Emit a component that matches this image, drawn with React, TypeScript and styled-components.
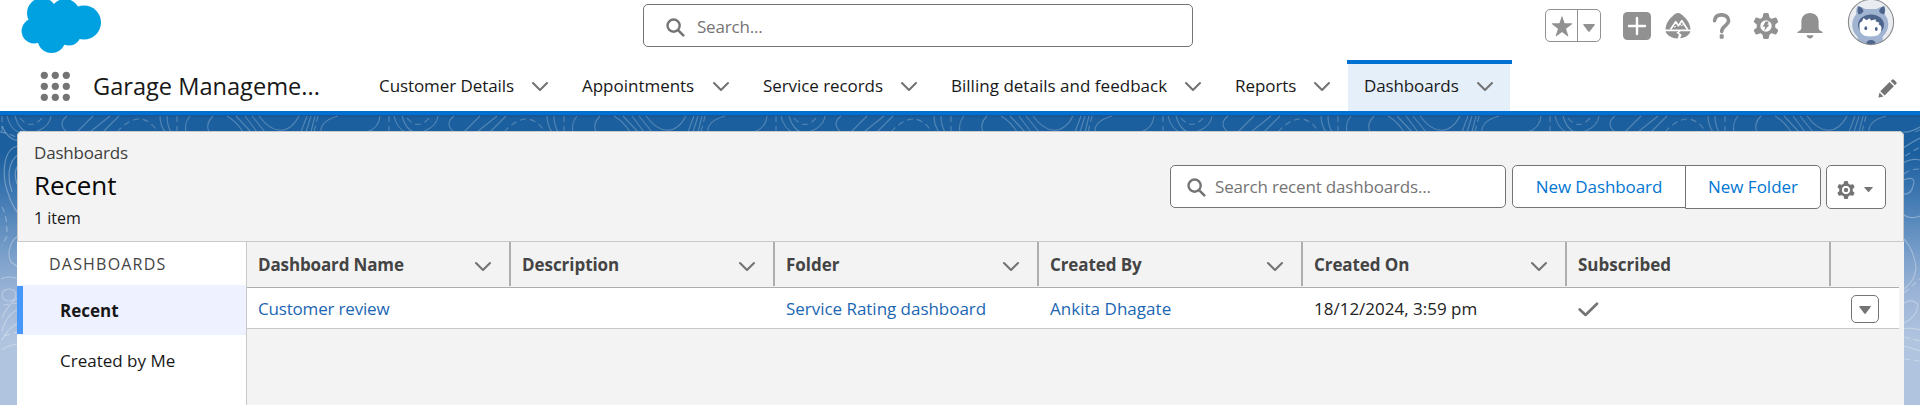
import React from "react";
import styled, { createGlobalStyle } from "styled-components";

const gray = "#747474";
const iconGray = "#919191";
const brand = "#0070d2";
const line = "#c9c9c9";
const darkLine = "#aeaeae";

const GlobalStyle = createGlobalStyle`
  *, *::before, *::after { box-sizing: border-box; }
  body {
    margin: 0;
    overflow: hidden;
    font-family: "Open Sans", "Noto Sans", sans-serif;
    font-size: 17px;
    line-height: 24px;
    color: #181818;
    background: #fff;
  }
  svg { display: block; flex: none; }
`;

const Page = styled.div`
  display: flex;
  flex-direction: column;
  height: 405px;
  overflow: hidden;
`;

const Text = styled.span<{ $ls?: number }>`
  white-space: nowrap;
  letter-spacing: ${(p) => p.$ls ?? 0}px;
`;

/* ---------- global header ---------- */

const TopBar = styled.header`
  display: grid;
  grid-template-columns: 643px 550px 1fr;
  align-items: start;
  flex: none;
  height: 60px;
  background: #fff;
`;

const LogoArea = styled.div`
  padding-left: 20px;
`;

const SearchBox = styled.div<{ $w: number; $pad: number; $gap: number }>`
  display: flex;
  align-items: center;
  gap: ${(p) => p.$gap}px;
  width: ${(p) => p.$w}px;
  height: 43px;
  padding: 1px 0 0 ${(p) => p.$pad}px;
  border: 1px solid ${gray};
  border-radius: 5px;
  background: #fff;
  color: ${gray};
`;

const GlobalSearch = styled(SearchBox)`
  margin-top: 4px;
  padding-top: 3px;
`;

const Actions = styled.div`
  display: flex;
  align-items: flex-start;
  padding-left: 352px;
`;

const Favorites = styled.div`
  display: flex;
  width: 56px;
  height: 33px;
  margin: 9px 22px 0 0;
  border: 1px solid ${iconGray};
  border-radius: 5px;
`;

const FavoriteHalf = styled.span<{ $w: number }>`
  display: flex;
  align-items: center;
  justify-content: center;
  width: ${(p) => p.$w}px;
  & + & {
    padding-top: 4px;
    border-left: 1px solid ${iconGray};
  }
`;

const ActionIcon = styled.span<{ $gap: number }>`
  margin: 12px ${(p) => p.$gap}px 0 0;
`;

/* ---------- navigation ---------- */

const Nav = styled.nav`
  display: flex;
  flex: none;
  height: 55px;
  border-bottom: 4px solid ${brand};
  background: #fff;
`;

const Launcher = styled.div`
  display: flex;
  align-items: center;
  width: 93px;
  padding-left: 40px;
`;

const AppName = styled.div`
  display: flex;
  align-items: center;
  width: 262px;
  font-size: 23.6px;
`;

const Tab = styled.div<{ $w: number; $active?: boolean }>`
  display: flex;
  align-items: center;
  justify-content: space-between;
  width: ${(p) => p.$w}px;
  padding: 0 9px 0 24px;
  ${(p) =>
    p.$active
      ? `
    margin-left: 7px;
    padding: 0 18px 4px 17px;
    border-top: 4px solid ${brand};
    background: linear-gradient(#e5effa, #e5effa) 1px 0 / 162px 100% no-repeat;
  `
      : ""}
`;

const EditNav = styled.span`
  margin: 19px 23px 0 auto;
`;

/* ---------- workspace ---------- */

const Workspace = styled.main`
  position: relative;
  flex: 1;
  padding: 16px 16px 0 17px;
  background: linear-gradient(#195594 0, #1b5f9e 4px, #1b5f9e 38px, #3a75b0 75px, #7099c6 130px, #9ab3d6 175px, #b0c4df 225px);
`;

const Contours = styled.svg`
  position: absolute;
  inset: 0;
`;

const Panel = styled.section`
  position: relative;
  display: flex;
  flex-direction: column;
  height: 290px;
  border-radius: 5px 5px 0 0;
  background: #f3f3f3;
  overflow: hidden;
`;

const PanelHeader = styled.div`
  display: flex;
  justify-content: space-between;
  flex: none;
  height: 111px;
  padding: 0 17px 0 16px;
  border: 1px solid ${line};
  border-radius: 5px 5px 0 0;
`;

const Heading = styled.div`
  display: flex;
  flex-direction: column;
  padding-top: 9px;
  color: #181818;
`;

const Crumb = styled(Text)`
  color: #3e3e3c;
`;

const Title = styled.h1`
  margin: 0;
  padding-top: 2px;
  font-size: 26px;
  font-weight: 400;
  line-height: 36px;
  letter-spacing: -0.1px;
  color: #080707;
`;

const Count = styled.span`
  padding-top: 4px;
  font-size: 16px;
  line-height: 22px;
`;

const Toolbar = styled.div`
  display: flex;
  align-items: flex-start;
  padding-top: 33px;
`;

const Button = styled.button<{ $w: number; $h: number; $r: string }>`
  display: flex;
  align-items: center;
  justify-content: center;
  width: ${(p) => p.$w}px;
  height: ${(p) => p.$h}px;
  padding: 1px 0 0;
  border: 1px solid ${gray};
  border-radius: ${(p) => p.$r};
  background: #fff;
  color: #0176d3;
  font: inherit;
  & + & {
    margin-left: -1px;
    padding-top: 0;
  }
`;

const ButtonGroup = styled.div`
  display: flex;
  align-items: flex-start;
  margin: 0 5px 0 6px;
`;

const SettingsButton = styled(Button)`
  gap: 9px;
  padding: 5px 2px 0 0;
`;

const Content = styled.div`
  display: flex;
  flex: 1;
  min-height: 0;
`;

const Sidebar = styled.aside`
  width: 230px;
  border-right: 1px solid ${line};
  background: #fff;
  overflow: hidden;
`;

const SidebarTitle = styled.div`
  height: 43px;
  padding: 10px 0 0 32px;
  font-size: 16px;
  letter-spacing: 1.2px;
  color: #444;
`;

const SidebarItem = styled.div<{ $selected?: boolean }>`
  display: flex;
  align-items: center;
  height: 50px;
  padding: 2px 0 0 43px;
  white-space: nowrap;
  ${(p) =>
    p.$selected
      ? `
    font-weight: 700;
    background: linear-gradient(#4797f8, #4797f8) 0 1px / 6px 48px no-repeat, #eef1ff;
  `
      : ""}
`;

const Table = styled.div`
  display: flex;
  flex-direction: column;
  width: 1652px;
`;

const HeadRow = styled.div`
  display: flex;
  height: 46px;
  padding-bottom: 1px;
  border-bottom: 1px solid ${darkLine};
  color: #444;
  font-weight: 700;
`;

const HeadCell = styled.div`
  display: flex;
  align-items: center;
  justify-content: space-between;
  width: 264px;
  padding: 1px 17px 0 11px;
  border-right: 2px solid ${darkLine};
`;

const ChevronSlot = styled.span`
  padding-top: 3px;
`;

const DataRow = styled.div`
  display: flex;
  height: 41px;
  border-bottom: 1px solid ${line};
  background: #fff;
`;

const Cell = styled.div<{ $link?: boolean }>`
  display: flex;
  align-items: center;
  width: 264px;
  padding: 2px 0 0 11px;
  color: ${(p) => (p.$link ? "#1b66b3" : "#222")};
`;

const MenuCell = styled.div`
  display: flex;
  align-items: center;
  padding: 2px 0 0 20px;
`;

const RowMenu = styled.button`
  display: flex;
  align-items: center;
  justify-content: center;
  width: 28px;
  height: 28px;
  padding: 2px 0 0;
  border: 1px solid ${gray};
  border-radius: 5px;
  background: #fff;
`;

/* ---------- drawings ---------- */

const Cloud = () => (
  <svg width="82" height="54" viewBox="20 0 82 54" fill="#00a1e0">
    <circle cx="42" cy="13" r="15" />
    <circle cx="65" cy="14" r="15" />
    <circle cx="84" cy="22.5" r="17" />
    <circle cx="34" cy="31" r="12.4" />
    <circle cx="51.5" cy="39" r="14" />
    <circle cx="69" cy="33.5" r="12" />
    <path d="M36 14H80V36H36Z" />
  </svg>
);

const Chevron = () => (
  <svg width="18" height="12" viewBox="0 0 18 12" fill="none" stroke={gray} strokeWidth="2.1" strokeLinecap="round" strokeLinejoin="round">
    <path d="M2 3l7 7 7-7" />
  </svg>
);

const Search = () => (
  <svg width="19" height="19" viewBox="0 0 19 19" fill="none" stroke={gray} strokeLinecap="round">
    <circle cx="7.6" cy="7.6" r="6.1" strokeWidth="2.4" />
    <path d="M12.3 12.3L17.3 17.3" strokeWidth="2.6" />
  </svg>
);

const Caret = ({ w, h, color = gray }: { w: number; h: number; color?: string }) => (
  <svg width={w} height={h} viewBox="0 0 12 8" preserveAspectRatio="none" fill={color}>
    <path d="M.8 0h10.4q1 0 .5.9L6.7 7.5q-.7.8-1.4 0L.3.9Q-.2 0 .8 0z" />
  </svg>
);

const Star = () => (
  <svg width="22" height="22" viewBox="0 0 22 22" fill={iconGray}>
    <path d="M11 .6l2.6 7.6h7.2q.8.3.1 1L15 13.7l2.3 7q.1.8-.7.5L11 17l-5.6 4.2q-.8.3-.7-.5l2.3-7L1.1 9.2q-.7-.7.1-1h7.2z" />
  </svg>
);

const Plus = () => (
  <svg width="28" height="28" viewBox="0 0 28 28">
    <rect width="28" height="28" rx="4.5" fill={iconGray} />
    <path d="M14 6v16M6 14h16" stroke="#fff" strokeWidth="2.4" strokeLinecap="round" />
  </svg>
);

const Trail = () => (
  <svg width="28" height="28" viewBox="0 0 28 28">
    <path d="M14 1c2 0 4 1.7 5.500 3.200 4 3.600 6.700 7.500 7 13.300H1.500c.3-5.800 3-9.700 7-13.300C10 2.700 12 1 14 1z" fill={iconGray} />
    <path d="M6.500 17.500l5.200-7.800 2.700 4 3.400-5 5.800 8.800" fill="none" stroke="#fff" strokeWidth="1.7" strokeLinejoin="round" />
    <path d="M9.200 13.700l1.600 1.500 1.200-1.200M15.800 12l1.900 1.700 1.900-1.500" fill="none" stroke="#fff" strokeWidth="1" />
    <path d="M1.500 19.300h13l-2.200 1.500 2.600 1.800-1.200 3.800C8.500 26.500 3 24 1.500 19.300zM16.500 19.300h10c-1.300 4.300-5.600 6.600-10.400 7l1.600-3.600-2.700-1.900z" fill={iconGray} />
  </svg>
);

const Help = () => (
  <svg width="20" height="28" viewBox="0 0 20 28" fill="none" stroke={iconGray}>
    <path d="M2.600 8.600C3 4.900 5.900 2.900 9.600 2.900c4 0 7 2.300 7 5.700 0 5-6.900 5-6.900 11" strokeWidth="3.600" strokeLinecap="round" />
    <rect x="7.700" y="22.300" width="4" height="4.400" rx="1" fill={iconGray} stroke="none" />
  </svg>
);

const teeth = [0, 60, 120, 180, 240, 300];

const SetupGear = () => (
  <svg width="26" height="28" viewBox="-13 -14 26 28">
    {teeth.map((a) => (
      <path key={a} transform={`rotate(${a})`} d="M-3.600-8l.9-4.200q.3-.8 1.100-.8h3.200q.800 0 1.100.8l.9 4.200z" fill={iconGray} />
    ))}
    <circle r="9.300" fill={iconGray} />
    <circle r="5.700" fill="#fff" />
    <path d="M-.6-4.400h3.400L1.400-1.200h2L-1.800 5l1-4.300h-2.400z" fill={iconGray} />
  </svg>
);

const SmallGear = () => (
  <svg width="18" height="18" viewBox="-13 -13 26 26" fill={gray}>
    {teeth.map((a) => (
      <path key={a} transform={`rotate(${a})`} d="M-3.600-8l.9-4.200q.3-.8 1.100-.8h3.200q.800 0 1.100.8l.9 4.200z" />
    ))}
    <circle r="7.700" fill="none" stroke={gray} strokeWidth="4.200" />
    <circle r="3.400" />
    <circle r="4.500" fill="none" stroke="#fff" strokeWidth="2.200" />
  </svg>
);

const Bell = () => (
  <svg width="26" height="28" viewBox="0 0 26 28" fill={iconGray}>
    <path d="M13 1c5 0 8.600 3.500 8.600 8.500v6c0 2 .9 2.900 2.700 3.800 1 .5 1.300.8 1.300 1.700H.4c0-.9.3-1.200 1.300-1.700 1.800-.9 2.700-1.800 2.700-3.800v-6C4.400 4.500 8 1 13 1zM9.600 23.200h6.800c-.2 1.900-1.600 3.200-3.400 3.200s-3.200-1.300-3.400-3.200z" />
  </svg>
);

const Avatar = () => (
  <svg width="48" height="46" viewBox="1847 0 48 46">
    <defs>
      <clipPath id="face">
        <circle cx="1871" cy="22" r="22.500" />
      </clipPath>
    </defs>
    <circle cx="1871" cy="22" r="22.500" fill="#e9ecf1" />
    <g clipPath="url(#face)">
      <path d="M1857.500 6q5 1 8 3h11q3-2 8-3 1.500 4 .2 8 3.800 5 3.500 10.500 0 7-5.500 12v10h-25V37q-5.500-5-5.500-12.500 0-5.500 4.200-10.500-.8-4 1.100-8z" fill="#a0b4d2" />
      <path d="M1858.500 6.200q4 1.300 5 4.800-1 3-5 3.300-2-4 0-8.100zM1884 6.200q-4 1.300-5 4.800 1 3 5 3.300 2-4 0-8.100z" fill="#4d658d" />
      <ellipse cx="1871" cy="25" rx="13" ry="10.500" fill="#4d658d" />
      <path d="M1859.500 27q-.5-5 2.500-5.500l1.500-3.500 3 2.300 3-2 1.500 2.300 5-1.300-.5 2 4 1.500-1 1.500q3 1 3 4.200 0 8-11 8-11 0-11-9.500z" fill="#fff" />
      <ellipse cx="1865.800" cy="28.300" rx="1.400" ry="2" fill="#4d658d" />
      <ellipse cx="1876.300" cy="29" rx="1.400" ry="2" fill="#4d658d" />
      <ellipse cx="1871" cy="43.500" rx="4.700" ry="3.500" fill="#4d658d" />
    </g>
    <circle cx="1871" cy="22" r="22.600" fill="none" stroke="#8b8b8b" strokeWidth="1.100" />
  </svg>
);

const dotCenters = [4.3, 15.3, 26.3];

const Dots = () => (
  <svg width="30" height="30" viewBox="0 0 30 30" fill={gray}>
    {dotCenters.map((y) => dotCenters.map((x) => <circle key={`${x}-${y}`} cx={x} cy={y} r="3.600" />))}
  </svg>
);

const Pencil = () => (
  <svg width="19" height="19" viewBox="0 0 19 19" fill={gray}>
    <path d="M2.300 12.300L11.600 3l4.300 4.300-9.300 9.300zM1.500 13.600l3.900 3.900-4.300 1.100q-.8.100-.6-.7zM12.700 2l1.300-1.300q1-.9 2 0l2.200 2.200q.9 1 0 2l-1.300 1.300z" />
  </svg>
);

const Check = () => (
  <svg width="21" height="15" viewBox="0 0 21 15" fill="none" stroke={gray} strokeWidth="2.600" strokeLinecap="round" strokeLinejoin="round">
    <path d="M1.700 7.500l5.800 5.500L19 1.700" />
  </svg>
);

const ContourLines = () => (
  <Contours width="1920" height="290" viewBox="0 0 1920 290" fill="none">
    <defs>
      <pattern id="contour" width="387" height="290" patternUnits="userSpaceOnUse">
        <g stroke="#fff" strokeOpacity=".24" strokeWidth="1.100">
          <path d="M7 1Q10 14 20 18M15 1Q20 18 31 17M51 1Q49 13 34 17M67 1Q57 9 67 17M93 1L77 17M110 1L90 17M119 1L103 17" />
          <path d="M160 1Q160 10 165 17M167 1Q167 10 171 17M186 17Q184 8 190 1M213 1Q205 9 209 17M227 1Q237 7 243 17M236 1L251 17M245 1L257 17M252 1L265 17M259 1C273 20 289 20 299 1M301 17L307 1M306 17L311 1M311 17L315 1M338 1Q320 6 321 17M367 17Q379 13 380 1" />
          <path d="M2 17V1M20 3Q31 16 42 3M117 17Q141-9 158 17M177 1V17M318 1L314 17" strokeDasharray="6 4" />
        </g>
      </pattern>
    </defs>
    <rect width="1920" height="17" fill="url(#contour)" />
    <g stroke="#fff" strokeOpacity=".3" strokeWidth="1.200">
      <path d="M2 11Q7 24 19 26M18 31C2 34 2 62 8 78Q12 91 18 98M18 40C8 46 7 64 12 77M18 50Q13 58 17 69M18 121C9 127 7 140 11 147L18 152M1 164Q9 160 18 164M2 203Q8 189 18 183M2 216Q6 200 18 194M2 225Q8 213 18 208M2 235Q8 230 18 229" />
      <ellipse cx="9" cy="180" rx="7" ry="6" />
      <path d="M0 17Q8 18 16 22M2 92Q7 99 7 121L2 131M3 190L18 188M4 221L18 217" strokeDasharray="6 4" />
      <path d="M1903 17Q1909 18 1920 12M1903 33Q1912 27 1920 23M1903 48Q1912 43 1920 45M1903 65Q1917 60 1913 71Q1911 80 1903 79M1903 99Q1909 105 1920 101M1904 124Q1914 135 1916 153Q1915 166 1904 174M1904 188Q1913 183 1918 190Q1917 202 1904 208M1904 214Q1910 212 1920 215M1904 231L1920 236" />
      <path d="M1905 41L1920 32M1904 59Q1910 54 1920 54M1904 178L1920 164M1904 222L1920 226M1904 244L1920 246" strokeDasharray="6 4" />
    </g>
  </Contours>
);

/* ---------- content ---------- */

const tabs = [
  { label: "Customer Details", width: 203, ls: -0.08 },
  { label: "Appointments", width: 181, ls: -0.02 },
  { label: "Service records", width: 188, ls: -0.07 },
  { label: "Billing details and feedback", width: 284, ls: 0.02 },
  { label: "Reports", width: 129, ls: -0.05 },
];

const columns = [
  { label: "Dashboard Name", ls: -0.14 },
  { label: "Description", ls: -0.05 },
  { label: "Folder", ls: 0 },
  { label: "Created By", ls: -0.1 },
  { label: "Created On", ls: -0.08 },
  { label: "Subscribed", ls: 0, fixed: true },
];

export default function App() {
  return (
    <Page>
      <GlobalStyle />
      <TopBar>
        <LogoArea>
          <Cloud />
        </LogoArea>
        <GlobalSearch $w={550} $pad={22} $gap={12}>
          <Search />
          <Text $ls={-0.2}>Search...</Text>
        </GlobalSearch>
        <Actions>
          <Favorites>
            <FavoriteHalf $w={32}>
              <Star />
            </FavoriteHalf>
            <FavoriteHalf $w={23}>
              <Caret w={12} h={8} color={iconGray} />
            </FavoriteHalf>
          </Favorites>
          <ActionIcon $gap={13}>
            <Plus />
          </ActionIcon>
          <ActionIcon $gap={20}>
            <Trail />
          </ActionIcon>
          <ActionIcon $gap={21}>
            <Help />
          </ActionIcon>
          <ActionIcon $gap={18}>
            <SetupGear />
          </ActionIcon>
          <ActionIcon $gap={24}>
            <Bell />
          </ActionIcon>
          <Avatar />
        </Actions>
      </TopBar>

      <Nav>
        <Launcher>
          <Dots />
        </Launcher>
        <AppName>
          <Text>Garage Manageme...</Text>
        </AppName>
        {tabs.map((t) => (
          <Tab key={t.label} $w={t.width}>
            <Text $ls={t.ls}>{t.label}</Text>
            <Chevron />
          </Tab>
        ))}
        <Tab $w={165} $active>
          <Text $ls={-0.12}>Dashboards</Text>
          <Chevron />
        </Tab>
        <EditNav>
          <Pencil />
        </EditNav>
      </Nav>

      <Workspace>
        <ContourLines />
        <Panel>
          <PanelHeader>
            <Heading>
              <Crumb $ls={-0.2}>Dashboards</Crumb>
              <Title>Recent</Title>
              <Count>1 item</Count>
            </Heading>
            <Toolbar>
              <SearchBox $w={336} $pad={16} $gap={9}>
                <Search />
                <Text $ls={-0.18}>Search recent dashboards...</Text>
              </SearchBox>
              <ButtonGroup>
                <Button $w={174} $h={43} $r="5px 0 0 5px">
                  <Text $ls={-0.1}>New Dashboard</Text>
                </Button>
                <Button $w={136} $h={44} $r="0 5px 5px 0">
                  <Text>New Folder</Text>
                </Button>
              </ButtonGroup>
              <SettingsButton $w={60} $h={44} $r="5px">
                <SmallGear />
                <Caret w={9} h={5} />
              </SettingsButton>
            </Toolbar>
          </PanelHeader>
          <Content>
            <Sidebar>
              <SidebarTitle>DASHBOARDS</SidebarTitle>
              <SidebarItem $selected>Recent</SidebarItem>
              <SidebarItem>Created by Me</SidebarItem>
              <SidebarItem>Private Dashboards</SidebarItem>
            </Sidebar>
            <Table>
              <HeadRow>
                {columns.map((c) => (
                  <HeadCell key={c.label}>
                    <Text $ls={c.ls}>{c.label}</Text>
                    {!c.fixed && (
                      <ChevronSlot>
                        <Chevron />
                      </ChevronSlot>
                    )}
                  </HeadCell>
                ))}
              </HeadRow>
              <DataRow>
                <Cell $link>
                  <Text $ls={-0.18}>Customer review</Text>
                </Cell>
                <Cell />
                <Cell $link>
                  <Text $ls={-0.03}>Service Rating dashboard</Text>
                </Cell>
                <Cell $link>
                  <Text $ls={0.03}>Ankita Dhagate</Text>
                </Cell>
                <Cell>
                  <Text>18/12/2024, 3:59 pm</Text>
                </Cell>
                <Cell>
                  <Check />
                </Cell>
                <MenuCell>
                  <RowMenu>
                    <Caret w={12} h={8} />
                  </RowMenu>
                </MenuCell>
              </DataRow>
            </Table>
          </Content>
        </Panel>
      </Workspace>
    </Page>
  );
}
